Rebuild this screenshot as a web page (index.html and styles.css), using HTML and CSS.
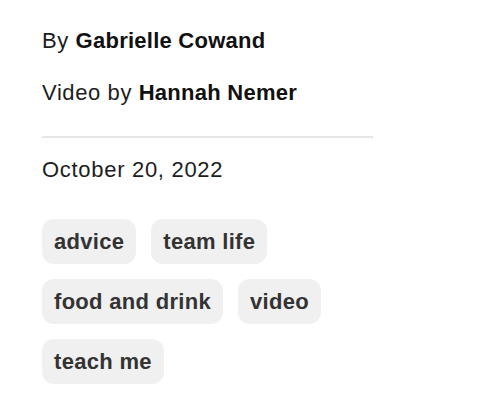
FILE: index.html
```html
<!DOCTYPE html>
<html lang="en">
<head>
  <meta charset="UTF-8" />
  <title>Article meta</title>
  <link rel="stylesheet" href="styles.css">
</head>
<body>

  <aside class="byline">
    <p class="credit">By <strong>Gabrielle Cowand</strong></p>
    <p class="credit credit-video">Video by <strong>Hannah Nemer</strong></p>

    <hr class="divider" />

    <time class="date" datetime="2022-10-20">October 20, 2022</time>

    <ul class="tags">
      <li class="tag">advice</li>
      <li class="tag">team life</li>
      <li class="tag">food and drink</li>
      <li class="tag">video</li>
      <li class="tag">teach me</li>
    </ul>
  </aside>

</body>
</html>
```

FILE: styles.css
```css
/* Article byline, date and tag list */
body {
  font-family: "Liberation Sans", Arial, sans-serif;
  background-color: #fff;
  color: #1d1d1d;
  margin: 0;
}
.byline {
  width: 331px;
  padding: 26px 42px;
}
.credit {
  margin: 0;
  font-size: 22px;
  line-height: 30px;
  letter-spacing: 0.6px;
}
.credit strong {
  color: #111;
  font-weight: 700;
  letter-spacing: 0.25px;
}
.credit-video {
  margin-top: 22px;
}
.divider {
  border: none;
  height: 2px;
  background-color: #e6e6e6;
  margin: 28px 0 17px;
}
.date {
  display: block;
  font-size: 22px;
  line-height: 30px;
  letter-spacing: 0.7px;
}
.tags {
  list-style: none;
  margin: 34px 0 0;
  padding: 0;
  display: flex;
  flex-wrap: wrap;
  gap: 15px;
}
.tag {
  background-color: #f0f0f0;
  color: #333;
  font-size: 22px;
  font-weight: 700;
  line-height: 25px;
  letter-spacing: 0.3px;
  padding: 10px 12px;
  border-radius: 12px;
}
```
